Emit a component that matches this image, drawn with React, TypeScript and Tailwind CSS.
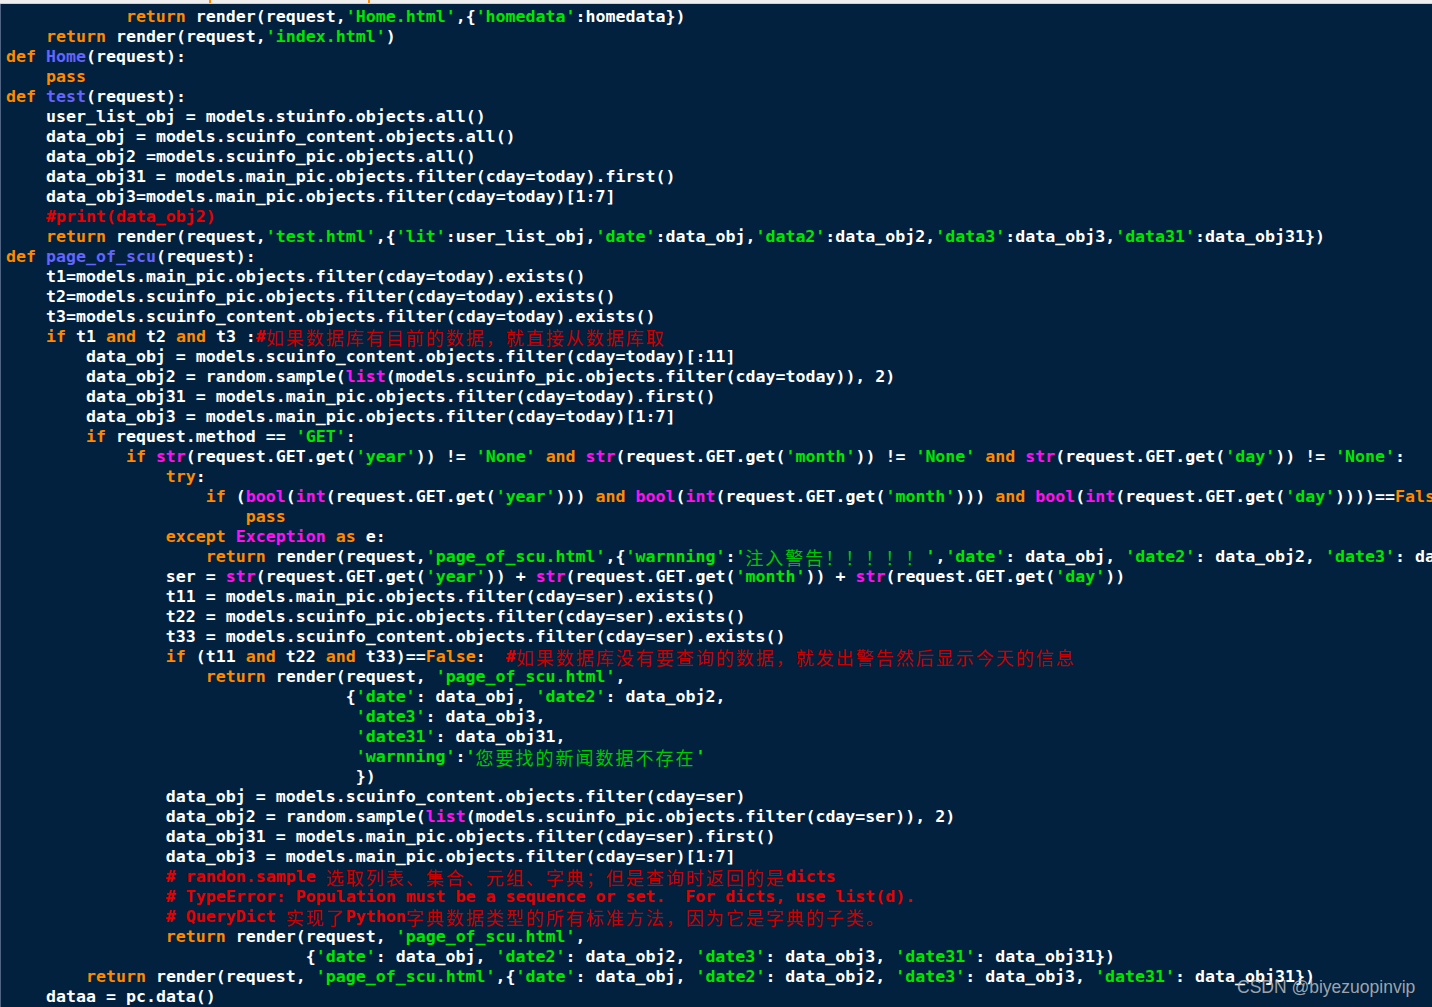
import React from "react";

const LINES: string[] = [
  "            return render(request,'Home.html',{'homedata':homedata})",
  "    return render(request,'index.html')",
  "def Home(request):",
  "    pass",
  "def test(request):",
  "    user_list_obj = models.stuinfo.objects.all()",
  "    data_obj = models.scuinfo_content.objects.all()",
  "    data_obj2 =models.scuinfo_pic.objects.all()",
  "    data_obj31 = models.main_pic.objects.filter(cday=today).first()",
  "    data_obj3=models.main_pic.objects.filter(cday=today)[1:7]",
  "    #print(data_obj2)",
  "    return render(request,'test.html',{'lit':user_list_obj,'date':data_obj,'data2':data_obj2,'data3':data_obj3,'data31':data_obj31})",
  "def page_of_scu(request):",
  "    t1=models.main_pic.objects.filter(cday=today).exists()",
  "    t2=models.scuinfo_pic.objects.filter(cday=today).exists()",
  "    t3=models.scuinfo_content.objects.filter(cday=today).exists()",
  "    if t1 and t2 and t3 :#如果数据库有目前的数据，就直接从数据库取",
  "        data_obj = models.scuinfo_content.objects.filter(cday=today)[:11]",
  "        data_obj2 = random.sample(list(models.scuinfo_pic.objects.filter(cday=today)), 2)",
  "        data_obj31 = models.main_pic.objects.filter(cday=today).first()",
  "        data_obj3 = models.main_pic.objects.filter(cday=today)[1:7]",
  "        if request.method == 'GET':",
  "            if str(request.GET.get('year')) != 'None' and str(request.GET.get('month')) != 'None' and str(request.GET.get('day')) != 'None':",
  "                try:",
  "                    if (bool(int(request.GET.get('year'))) and bool(int(request.GET.get('month'))) and bool(int(request.GET.get('day'))))==False:",
  "                        pass",
  "                except Exception as e:",
  "                    return render(request,'page_of_scu.html',{'warnning':'注入警告！！！！！','date': data_obj, 'date2': data_obj2, 'date3': data_obj3, 'date31': data_obj31})",
  "                ser = str(request.GET.get('year')) + str(request.GET.get('month')) + str(request.GET.get('day'))",
  "                t11 = models.main_pic.objects.filter(cday=ser).exists()",
  "                t22 = models.scuinfo_pic.objects.filter(cday=ser).exists()",
  "                t33 = models.scuinfo_content.objects.filter(cday=ser).exists()",
  "                if (t11 and t22 and t33)==False:  #如果数据库没有要查询的数据，就发出警告然后显示今天的信息",
  "                    return render(request, 'page_of_scu.html',",
  "                                  {'date': data_obj, 'date2': data_obj2,",
  "                                   'date3': data_obj3,",
  "                                   'date31': data_obj31,",
  "                                   'warnning':'您要找的新闻数据不存在'",
  "                                   })",
  "                data_obj = models.scuinfo_content.objects.filter(cday=ser)",
  "                data_obj2 = random.sample(list(models.scuinfo_pic.objects.filter(cday=ser)), 2)",
  "                data_obj31 = models.main_pic.objects.filter(cday=ser).first()",
  "                data_obj3 = models.main_pic.objects.filter(cday=ser)[1:7]",
  "                # randon.sample 选取列表、集合、元组、字典；但是查询时返回的是dicts",
  "                # TypeError: Population must be a sequence or set.  For dicts, use list(d).",
  "                # QueryDict 实现了Python字典数据类型的所有标准方法，因为它是字典的子类。",
  "                return render(request, 'page_of_scu.html',",
  "                              {'date': data_obj, 'date2': data_obj2, 'date3': data_obj3, 'date31': data_obj31})",
  "        return render(request, 'page_of_scu.html',{'date': data_obj, 'date2': data_obj2, 'date3': data_obj3, 'date31': data_obj31})",
  "    dataa = pc.data()",
];

const KW = new Set(["def", "return", "pass", "if", "and", "try", "except", "as", "False", "or", "not", "in", "for"]);
const BI = new Set(["str", "list", "bool", "int", "Exception"]);

type TT = "kw" | "bi" | "fn" | "str" | "cm" | "pl";
type Tok = { t: TT; s: string };

function tokenize(line: string): Tok[] {
  const out: Tok[] = [];
  let i = 0;
  let prevDef = false;
  while (i < line.length) {
    const c = line[i];
    if (c === "#") {
      out.push({ t: "cm", s: line.slice(i) });
      break;
    }
    if (c === "'") {
      let j = line.indexOf("'", i + 1);
      if (j < 0) j = line.length - 1;
      out.push({ t: "str", s: line.slice(i, j + 1) });
      i = j + 1;
      continue;
    }
    if (/[A-Za-z_]/.test(c)) {
      let j = i;
      while (j < line.length && /[A-Za-z0-9_]/.test(line[j])) j++;
      const w = line.slice(i, j);
      let t: TT = "pl";
      if (prevDef) {
        t = "fn";
        prevDef = false;
      } else if (KW.has(w)) t = "kw";
      else if (BI.has(w)) t = "bi";
      if (w === "def") prevDef = true;
      out.push({ t, s: w });
      i = j;
      continue;
    }
    let j = i;
    while (j < line.length && !/[A-Za-z_'#]/.test(line[j])) j++;
    out.push({ t: "pl", s: line.slice(i, j) });
    i = j;
  }
  return out;
}

const MONO: Record<TT, string> = {
  kw: "text-[#ff8a00]",
  bi: "text-[#ff10f0]",
  fn: "text-[#6464ff]",
  str: "text-[#00e600]",
  cm: "text-[#e60000]",
  pl: "text-white",
};

const CJK_CLS: Record<TT, string> = {
  kw: "text-[#ff8a00]",
  bi: "text-[#ff10f0]",
  fn: "text-[#6464ff]",
  str: "text-[#00c800]",
  cm: "text-[#c80000]",
  pl: "text-white",
};

const CJK_RE = /([\u3000-\u303f\u4e00-\u9fff\uff00-\uffef]+)/;

function Token({ tok }: { tok: Tok }) {
  const parts = tok.s.split(CJK_RE).filter((p) => p.length > 0);
  return (
    <>
      {parts.map((p, k) =>
        CJK_RE.test(p) ? (
          <span
            key={k}
            className={`inline-block align-top font-normal text-[18px] tracking-[2px] leading-[20px] ${CJK_CLS[tok.t]}`}
            style={{ fontFamily: '"Noto Sans CJK SC", "Noto Sans CJK JP", sans-serif' }}
          >
            {p}
          </span>
        ) : (
          <span key={k} className={MONO[tok.t]}>
            {p}
          </span>
        )
      )}
    </>
  );
}

export default function App() {
  return (
    <div className="relative w-[1432px] h-[1007px] overflow-hidden bg-[#01213f] flex flex-col">
      <div className="h-[4px] bg-[#eeeeee] border-b border-[#cfcfcf] flex shrink-0">
        <div className="ml-[209px] w-[2px] h-[3px] bg-[#ff8a00]" />
        <div className="ml-[157px] w-[2px] h-[3px] bg-[#ff8a00]" />
      </div>
      <div
        className="flex-1 border-l border-[#4e6482] pl-[5px] pt-[3px] overflow-hidden font-bold text-[16.6px] leading-[20px] whitespace-pre"
        style={{ fontFamily: '"DejaVu Sans Mono", "Liberation Mono", monospace' }}
      >
        {LINES.map((ln, idx) => (
          <div key={idx} className="h-[20px] whitespace-pre">
            {tokenize(ln).map((t, k) => (
              <Token key={k} tok={t} />
            ))}
          </div>
        ))}
      </div>
      <div
        className="absolute left-[1237px] top-[975px] text-[17.5px] leading-[24px] text-[#c8c8c8]/80 whitespace-nowrap"
        style={{ fontFamily: '"Liberation Sans", Arial, sans-serif' }}
      >
        CSDN @biyezuopinvip
      </div>
    </div>
  );
}
